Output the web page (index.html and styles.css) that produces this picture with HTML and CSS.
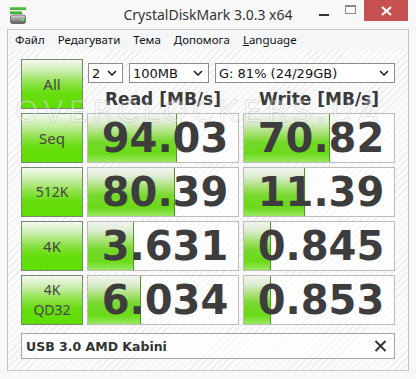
FILE: index.html
```html
<!DOCTYPE html>
<html>
<head>
<meta charset="utf-8">
<link rel="stylesheet" href="styles.css">
</head>
<body>
<div class="window">
  <header class="titlebar">
    <div class="tb-left">
      <svg class="app-icon" width="16" height="17" viewBox="0 0 16 17">
        <defs>
          <linearGradient id="gb" x1="0" y1="0" x2="0" y2="1">
            <stop offset="0" stop-color="#7fd86a"/>
            <stop offset="1" stop-color="#2f9e2a"/>
          </linearGradient>
          <linearGradient id="dr" x1="0" y1="0" x2="0" y2="1">
            <stop offset="0" stop-color="#d8d8d8"/>
            <stop offset="0.5" stop-color="#9a9a9a"/>
            <stop offset="1" stop-color="#5a5a5a"/>
          </linearGradient>
        </defs>
        <rect x="0" y="0" width="16" height="3" fill="url(#gb)"/>
        <rect x="0" y="4" width="12" height="3" fill="url(#gb)"/>
        <rect x="0.5" y="8" width="15" height="8.5" rx="2" fill="url(#dr)" stroke="#555" stroke-width="0.8"/>
        <rect x="11" y="11.5" width="3" height="2.5" fill="#5ee04a"/>
      </svg>
    </div>
    <div class="title">CrystalDiskMark 3.0.3 x64</div>
    <div class="tb-right">
      <span class="ctl min"><svg width="10" height="2" viewBox="0 0 10 2"><rect width="10" height="2" fill="#333"/></svg></span>
      <span class="ctl max"><svg width="11" height="9" viewBox="0 0 11 9"><rect x="0.5" y="0.5" width="10" height="8" fill="none" stroke="#8a8a8a"/><rect x="0.5" y="0.5" width="10" height="1.5" fill="#8a8a8a"/></svg></span>
      <span class="ctl close"><svg width="11" height="10" viewBox="0 0 11 10"><path d="M1 1 L10 9 M10 1 L1 9" stroke="#fff" stroke-width="2.2"/></svg></span>
    </div>
  </header>
  <div class="client">
    <nav class="menubar">
      <span class="mi">Файл</span>
      <span class="mi">Редагувати</span>
      <span class="mi">Тема</span>
      <span class="mi">Допомога</span>
      <span class="mi"><u>L</u>anguage</span>
    </nav>
    <main class="content">
      <div class="btn">All</div>
      <div class="top">
        <div class="selects">
          <div class="sel s1"><span>2</span><svg class="chev" width="10" height="6" viewBox="0 0 10 6"><path d="M1 1 L5 5 L9 1" fill="none" stroke="#222" stroke-width="1.6"/></svg></div>
          <div class="sel s2"><span>100MB</span><svg class="chev" width="10" height="6" viewBox="0 0 10 6"><path d="M1 1 L5 5 L9 1" fill="none" stroke="#222" stroke-width="1.6"/></svg></div>
          <div class="sel s3"><span>G: 81% (24/29GB)</span><svg class="chev" width="10" height="6" viewBox="0 0 10 6"><path d="M1 1 L5 5 L9 1" fill="none" stroke="#222" stroke-width="1.6"/></svg></div>
        </div>
        <div class="heads">
          <div class="head">Read [MB/s]</div>
          <div class="head">Write [MB/s]</div>
        </div>
      </div>

      <div class="btn">Seq</div>
      <div class="res"><div class="bar" style="width:89px"></div><div class="num">94.03</div></div>
      <div class="res"><div class="bar" style="width:86px"></div><div class="num">70.82</div></div>

      <div class="btn small">512K</div>
      <div class="res"><div class="bar" style="width:87px"></div><div class="num">80.39</div></div>
      <div class="res"><div class="bar" style="width:61px"></div><div class="num">11.39</div></div>

      <div class="btn">4K</div>
      <div class="res"><div class="bar" style="width:46px"></div><div class="num">3.631</div></div>
      <div class="res"><div class="bar" style="width:27px"></div><div class="num">0.845</div></div>

      <div class="btn two">4K<br>QD32</div>
      <div class="res"><div class="bar" style="width:53px"></div><div class="num">6.034</div></div>
      <div class="res"><div class="bar" style="width:27px"></div><div class="num">0.853</div></div>

      <div class="comment">
        <span class="ctext">USB 3.0 AMD Kabini</span>
        <svg class="cx" width="13" height="12" viewBox="0 0 13 12"><path d="M1.5 1 L11.5 11 M11.5 1 L1.5 11" stroke="#333" stroke-width="2"/></svg>
      </div>
      <div class="watermark">OVERCLOCKERS.UA</div>
    </main>
  </div>
</div>
</body>
</html>
```

FILE: styles.css
```css
* { box-sizing: border-box; }
html, body { margin: 0; padding: 0; }
body { width: 416px; height: 379px; overflow: hidden; background: #f8f8f8; }

.window {
  width: 416px;
  height: 379px;
  background: #f8f8f8;
  font-family: "Noto Sans", sans-serif;
  color: #222;
}

.titlebar {
  height: 29px;
  display: grid;
  grid-template-columns: 1fr auto 1fr;
  align-items: start;
}
.tb-left { padding: 7px 0 0 10px; }
.app-icon { display: block; }
.title {
  font-size: 14px;
  line-height: 29px;
  color: #333;
  white-space: nowrap;
}
.tb-right {
  justify-self: end;
  display: flex;
  padding-right: 8px;
}
.ctl {
  height: 21px;
  display: flex;
  align-items: center;
  justify-content: center;
}
.ctl.min { width: 27px; padding-top: 8px; }
.ctl.max { width: 27px; padding-bottom: 2px; }
.ctl.close { width: 44px; background: #c75050; }

.client {
  margin: 0 7px;
  height: 342px;
  border: 1px solid #c6c6c6;
  background: #f5f6f7;
}

.menubar {
  height: 20px;
  display: flex;
  gap: 13px;
  padding-left: 7px;
  font-size: 11.5px;
  line-height: 20px;
  color: #111;
  background: #f5f6f7;
}
.mi { white-space: nowrap; }

.content {
  position: relative;
  height: 320px;
  padding: 9px 13px 7px 13px;
  background:
    repeating-linear-gradient(135deg, #fbfbfb 0 4px, #ededed 4px 5px);
  display: grid;
  grid-template-columns: 62px 152px 152px;
  grid-template-rows: 50px 50px 50px 50px 50px 30px;
  column-gap: 4px;
  row-gap: 4px;
}

.btn {
  border: 1px solid #748a70;
  background: linear-gradient(180deg, #f4f9f0 0%, #cdeeb0 22%, #8ee24a 48%, #68de10 68%, #5fdf00 100%);
  display: flex;
  align-items: center;
  justify-content: center;
  text-align: center;
  font-size: 15px;
  color: #454545;
  line-height: 20px;
}
.btn.small { font-size: 14px; }
.btn.two { font-size: 14px; line-height: 20px; }

.top {
  grid-column: 2 / 4;
  display: flex;
  flex-direction: column;
}
.selects {
  margin-top: 4px;
  height: 20px;
  display: flex;
  gap: 6px;
  padding-left: 1px;
}
.sel {
  height: 20px;
  border: 1px solid #8c8c8c;
  background: #fff;
  display: flex;
  align-items: center;
  justify-content: space-between;
  padding: 0 5px 0 3px;
  font-family: "DejaVu Sans", sans-serif;
  font-size: 13px;
  color: #111;
}
.s1 { width: 35px; }
.s2 { width: 80px; }
.s3 { width: 180px; }
.chev { display: block; }

.heads {
  margin-top: 6px;
  display: grid;
  grid-template-columns: 152px 152px;
  column-gap: 4px;
}
.head {
  text-align: center;
  font-family: "DejaVu Sans", sans-serif;
  font-weight: bold;
  font-size: 17px;
  line-height: 20px;
  color: #3a3a3a;
}

.res {
  border: 1px solid #bcbcbc;
  background:
    repeating-linear-gradient(135deg, #ffffff 0 4px, #f6f6f6 4px 5px);
  display: grid;
  grid-template: 1fr / 1fr;
}
.bar {
  grid-area: 1 / 1;
  height: 100%;
  background: linear-gradient(180deg, #f2f4f0 0%, #dcecd0 18%, #a6e070 40%, #76d82c 58%, #6ada18 82%, #9ae862 100%);
  border-right: 1px solid #4a9a20;
}
.num {
  grid-area: 1 / 1;
  align-self: center;
  text-align: center;
  font-family: "DejaVu Sans", sans-serif;
  font-weight: bold;
  font-size: 40px;
  line-height: 1;
  color: #3d3d3d;
  padding-left: 4px;
  position: relative;
}

.comment {
  grid-column: 1 / 4;
  margin-top: 4px;
  border: 1px solid #a4a4a4;
  background:
    repeating-linear-gradient(135deg, #ffffff 0 4px, #f7f7f7 4px 5px);
  display: flex;
  align-items: center;
  justify-content: space-between;
  padding: 0 7px 0 4px;
}
.ctext {
  font-family: "DejaVu Sans", sans-serif;
  font-weight: bold;
  font-size: 12.5px;
  color: #333;
}
.cx { display: block; }

.watermark {
  position: absolute;
  left: 7px;
  top: 47px;
  font-family: "DejaVu Sans", sans-serif;
  font-size: 30px;
  line-height: 30px;
  letter-spacing: 5px;
  color: rgba(255, 255, 255, 0.3);
  -webkit-text-stroke: 1px rgba(140, 140, 140, 0.22);
  white-space: nowrap;
  pointer-events: none;
}
```
